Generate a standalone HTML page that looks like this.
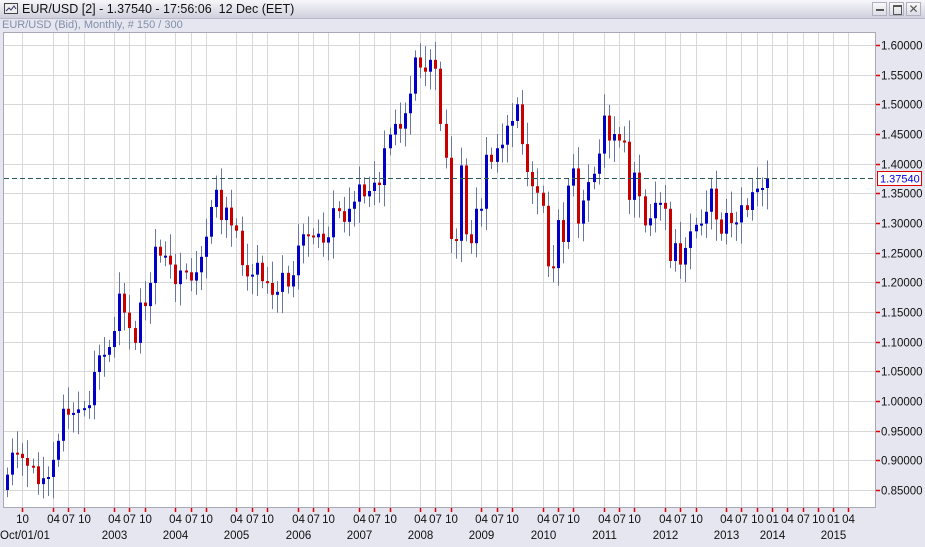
<!DOCTYPE html>
<html><head><meta charset="utf-8"><style>
html,body{margin:0;padding:0;width:925px;height:547px;overflow:hidden;background:#e6e6f0;font-family:"Liberation Sans",sans-serif}
#tb{position:absolute;left:0;top:0;width:925px;height:18px;background:linear-gradient(#f6f6fa,#d0d0de);border-bottom:1px solid #b8b8c8}
#tb .t{position:absolute;left:22px;top:2px;font-size:12.5px;color:#111}
#sub{position:absolute;left:2px;top:19px;font-size:11px;color:#8090a8}
.btn{position:absolute;top:2px;width:15px;height:14px;border:1px solid #b0b0c0;background:linear-gradient(#fafafa,#dcdce6);box-sizing:border-box}
svg{position:absolute;left:0;top:0}
</style></head><body>
<div id="tb"><svg width="16" height="14" style="left:4px;top:2px"><rect x="0.5" y="1.5" width="13" height="10" fill="#eee" stroke="#444"/><path d="M2 9 L5 6 L7 8 L10 4 L12 7" stroke="#336" fill="none"/></svg><span class="t">EUR/USD [2] - 1.37540 - 17:56:06&nbsp; 12 Dec (EET)</span>
<div class="btn" style="left:872px"><div style="position:absolute;left:3px;top:6px;width:8px;height:2px;background:#555"></div></div>
<div class="btn" style="left:889px"><div style="position:absolute;left:3px;top:2px;width:7px;height:7px;border:1px solid #555;border-top-width:2px"></div></div>
<div class="btn" style="left:906px;font-size:12px;color:#555;text-align:center;line-height:12px">✕</div>
</div>
<div id="sub">EUR/USD (Bid), Monthly, # 150 / 300</div>
<svg id="c" width="925" height="547"></svg>
<script>
var s='';
var L=3,R=875,T=32,B=508;
function Y(p){return 45+(1.60-p)/0.05*29.67;}
function X(m){return 7+m*5.1;}
s+='<rect x="'+L+'.5" y="'+T+'.5" width="'+(R-L)+'" height="'+(B-T-1)+'" fill="#fff" stroke="#a8a8b8"/>';
for(var i=0;i<=15;i++){var p=1.60-i*0.05,y=Math.round(Y(p))+0.5;
s+='<line x1="'+(L+1)+'" x2="'+R+'" y1="'+y+'" y2="'+y+'" stroke="#d8d8d8"/>';
s+='<line x1="'+(R+1)+'" x2="'+(R+5)+'" y1="'+y+'" y2="'+y+'" stroke="#e00000" stroke-width="1.5"/>';
s+='<text x="'+(R+6)+'" y="'+(y+4)+'" font-size="11.5" fill="#111">'+p.toFixed(5)+'</text>';}
var bot='';
for(var m=3;m<=165;m+=3){var x=Math.round(X(m))+0.5;var mon=(m+6)%12+1;var yr=2001+Math.floor((m+6)/12);
var show=(mon!=1)||yr>=2014;
if(!show)continue;
s+='<line x1="'+x+'" x2="'+x+'" y1="'+(T+1)+'" y2="'+(B-1)+'" stroke="#d8d8d8"/>';
s+='<line x1="'+x+'" x2="'+x+'" y1="'+B+'" y2="'+(B+4)+'" stroke="#e00000" stroke-width="1.5"/>';
var lab=(mon<10?'0':'')+mon;
bot+='<text x="'+x+'" y="523" font-size="11.5" fill="#111" text-anchor="middle">'+lab+'</text>';
if(mon==4&&yr>=2003&&yr<2014)bot+='<text x="'+x+'" y="539" font-size="11.5" fill="#111" text-anchor="middle">'+yr+'</text>';
if(mon==1&&yr>=2014)bot+='<text x="'+x+'" y="539" font-size="11.5" fill="#111" text-anchor="middle">'+yr+'</text>';}
bot+='<text x="0" y="539" font-size="11.5" fill="#111">Oct/01/01</text>';
var cl=[.876,.913,.911,.904,.891,.890,
.860,.870,.872,.901,.933,.987,.977,.980,.986,.988,.993,1.049,
1.077,1.078,1.091,1.118,1.181,1.149,1.123,1.098,1.166,1.160,1.199,1.260,
1.245,1.245,1.230,1.197,1.220,1.217,1.203,1.217,1.243,1.277,1.327,1.356,
1.305,1.326,1.296,1.287,1.229,1.210,1.213,1.233,1.202,1.199,1.179,1.184,
1.216,1.193,1.212,1.262,1.281,1.279,1.276,1.282,1.267,1.276,1.325,1.320,
1.302,1.324,1.336,1.365,1.345,1.354,1.368,1.364,1.426,1.449,1.467,1.459,
1.485,1.518,1.579,1.562,1.555,1.575,1.560,1.467,1.410,1.273,1.270,1.397,
1.281,1.266,1.324,1.324,1.415,1.403,1.426,1.432,1.464,1.472,1.500,1.433,
1.386,1.362,1.351,1.329,1.227,1.224,1.305,1.268,1.363,1.392,1.299,1.338,
1.369,1.383,1.417,1.481,1.439,1.450,1.439,1.437,1.339,1.385,1.345,1.296,
1.308,1.334,1.334,1.324,1.236,1.266,1.230,1.258,1.286,1.297,1.299,1.319,
1.358,1.306,1.282,1.317,1.300,1.301,1.330,1.322,1.352,1.358,1.359,1.3754];
var o=.850;
for(var k=0;k<cl.length;k++){var c=cl[k];var hi=Math.max(o,c)+0.012+((k*7)%5)*0.006,lo=Math.min(o,c)-0.012-((k*11)%5)*0.006;
var x=Math.round(X(k));
s+='<line x1="'+(x+0.5)+'" x2="'+(x+0.5)+'" y1="'+Y(hi)+'" y2="'+Y(lo)+'" stroke="#6878a0"/>';
var yt=Y(Math.max(o,c)),yb=Y(Math.min(o,c));if(yb-yt<2)yb=yt+2;
s+='<rect x="'+(x-1)+'" y="'+yt+'" width="3" height="'+(yb-yt)+'" fill="'+(c>=o?'#0000c8':'#c80000')+'"/>';
o=c;}
var yd=Math.round(Y(1.3754))+0.5;
s+='<line x1="'+(L+1)+'" x2="'+R+'" y1="'+yd+'" y2="'+yd+'" stroke="#2a5a5a" stroke-dasharray="5,3"/>';
s+='<rect x="877.5" y="'+(yd-7)+'" width="44" height="14" fill="#fff" stroke="#e00000"/>';
s+='<text x="880" y="'+(yd+4)+'" font-size="11" fill="#0000e0">1.37540</text>';
document.getElementById('c').innerHTML=s+bot;
</script>
</body></html>
